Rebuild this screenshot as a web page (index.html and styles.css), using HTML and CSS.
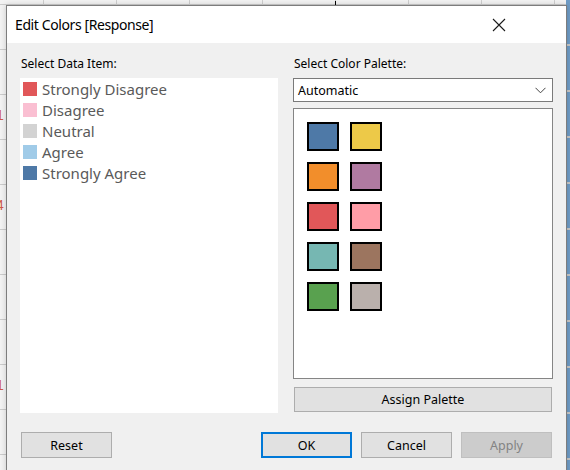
FILE: index.html
```html
<!DOCTYPE html>
<html>
<head>
<meta charset="utf-8">
<link rel="stylesheet" href="styles.css">
</head>
<body>
<div class="desktop">
  <div class="sheet">
    <span class="num n1">1</span>
    <span class="num n2">4</span>
    <span class="num n3">1</span>
    <span class="tick"></span>
  </div>
  <div class="side-strip"></div>
  <div class="dialog">
    <div class="titlebar">
      <span class="title">Edit Colors [Response]</span>
      <svg class="close" width="14" height="14" viewBox="0 0 14 14">
        <path d="M1 1 L13 13 M13 1 L1 13" stroke="#1a1a1a" stroke-width="1.1" fill="none"/>
      </svg>
    </div>
    <div class="body">
      <div class="columns">
        <div class="col">
          <div class="label">Select Data Item:</div>
          <div class="listbox">
            <div class="item"><span class="chip c-sd"></span>Strongly Disagree</div>
            <div class="item"><span class="chip c-d"></span>Disagree</div>
            <div class="item"><span class="chip c-n"></span>Neutral</div>
            <div class="item"><span class="chip c-a"></span>Agree</div>
            <div class="item"><span class="chip c-sa"></span>Strongly Agree</div>
          </div>
        </div>
        <div class="col">
          <div class="label">Select Color Palette:</div>
          <div class="select">
            <span>Automatic</span>
            <svg class="chev" width="11" height="7" viewBox="0 0 11 7">
              <path d="M0.5 0.8 L5.5 5.8 L10.5 0.8" stroke="#444" stroke-width="1" fill="none"/>
            </svg>
          </div>
          <div class="palette">
            <div class="swatches">
              <span class="sw p1"></span><span class="sw p2"></span>
              <span class="sw p3"></span><span class="sw p4"></span>
              <span class="sw p5"></span><span class="sw p6"></span>
              <span class="sw p7"></span><span class="sw p8"></span>
              <span class="sw p9"></span><span class="sw p10"></span>
            </div>
          </div>
          <button class="btn assign">Assign Palette</button>
        </div>
      </div>
      <div class="footer">
        <button class="btn reset">Reset</button>
        <div class="spacer"></div>
        <button class="btn ok">OK</button>
        <button class="btn">Cancel</button>
        <button class="btn disabled">Apply</button>
      </div>
    </div>
  </div>
</div>
</body>
</html>
```
FILE: styles.css
```css
* { box-sizing: border-box; }
html, body { margin: 0; padding: 0; }
body {
  font-family: "Noto Sans", "DejaVu Sans", sans-serif;
  font-size: 12px;
  color: #000;
}
.desktop {
  position: relative;
  width: 570px;
  height: 470px;
  overflow: hidden;
  background: #f4f4f4;
}
.sheet {
  position: absolute;
  inset: 0;
  background-color: #f3f3f3;
  background-image:
    repeating-linear-gradient(to right, transparent 0 43px, #cfcfcf 43px 44px, transparent 44px 73px),
    repeating-linear-gradient(to bottom, transparent 0 4px, #cccccc 4px 5px, transparent 5px 45px);
}
.num {
  position: absolute;
  left: -4px;
  font-family: "Liberation Sans", sans-serif;
  font-size: 14px;
  color: #d05a4a;
}
.n1 { top: 107px; }
.n2 { top: 197px; }
.n3 { top: 377px; }
.tick {
  position: absolute;
  left: 335px;
  top: 1px;
  width: 1px;
  height: 5px;
  background: #000;
}
.side-strip {
  position: absolute;
  right: 0;
  top: 0;
  width: 4px;
  height: 470px;
  background:
    repeating-linear-gradient(to bottom, #6f9cc6 0 44px, #c8c8c8 44px 46px);
}
.dialog {
  position: absolute;
  left: 6px;
  top: 5px;
  width: 561px;
  height: 480px;
  background: #f0f0f0;
  border: 1px solid #7d7d7d;
  box-shadow: 0 0 6px rgba(0,0,0,0.18);
  display: flex;
  flex-direction: column;
}
.titlebar {
  height: 37px;
  background: #fff;
  display: flex;
  align-items: center;
  justify-content: space-between;
  padding: 0 60px 0 8px;
}
.title {
  font-size: 14px;
  letter-spacing: -0.4px;
  color: #000;
}
.close { display: block; }
.body {
  padding: 13px 13px 0 13px;
}
.columns {
  display: grid;
  grid-template-columns: 258px 260px;
  column-gap: 15px;
}
.label {
  height: 22px;
  line-height: 16px;
  padding-left: 1px;
  color: #000;
}
.listbox {
  background: #fff;
  height: 335px;
  padding: 0 3px;
}
.item {
  display: flex;
  align-items: center;
  height: 21px;
  font-size: 15px;
  color: #5a5a5a;
  gap: 5px;
}
.chip {
  width: 14px;
  height: 14px;
  flex: none;
}
.c-sd { background: #e15759; }
.c-d { background: #fabfd2; }
.c-n { background: #d3d3d3; }
.c-a { background: #a0cbe8; }
.c-sa { background: #4e79a7; }
.select {
  height: 24px;
  background: #fff;
  border: 1px solid #7a7a7a;
  display: flex;
  align-items: center;
  justify-content: space-between;
  padding: 0 6px 0 4px;
  font-size: 12.5px;
  color: #000;
}
.chev { display: block; }
.palette {
  margin-top: 6px;
  height: 271px;
  background: #fff;
  border: 1px solid #858585;
  padding: 13px 0 0 13px;
}
.swatches {
  display: grid;
  grid-template-columns: 32px 32px;
  grid-auto-rows: 29px;
  column-gap: 11px;
  row-gap: 11px;
}
.sw {
  display: block;
  border: 2px solid #000;
}
.p1 { background: #4e79a7; }
.p2 { background: #edc948; }
.p3 { background: #f28e2b; }
.p4 { background: #b07aa1; }
.p5 { background: #e15759; }
.p6 { background: #ff9da7; }
.p7 { background: #76b7b2; }
.p8 { background: #9c755f; }
.p9 { background: #59a14f; }
.p10 { background: #bab0ac; }
.btn {
  font-family: inherit;
  font-size: 12.5px;
  color: #000;
  background: #e1e1e1;
  border: 1px solid #adadad;
  height: 26px;
  width: 91px;
  padding: 0;
  margin: 0;
}
.assign {
  margin-top: 8px;
  margin-left: 1px;
  width: 258px;
  height: 25px;
}
.footer {
  display: flex;
  margin-top: 19px;
  gap: 9px;
}
.reset { margin-left: 1px; }
.spacer { flex: 1; }
.ok { border: 2px solid #0078d7; width: 91px; }
.disabled {
  background: #cccccc;
  border-color: #bfbfbf;
  color: #838383;
  margin-right: 1px;
}
```
